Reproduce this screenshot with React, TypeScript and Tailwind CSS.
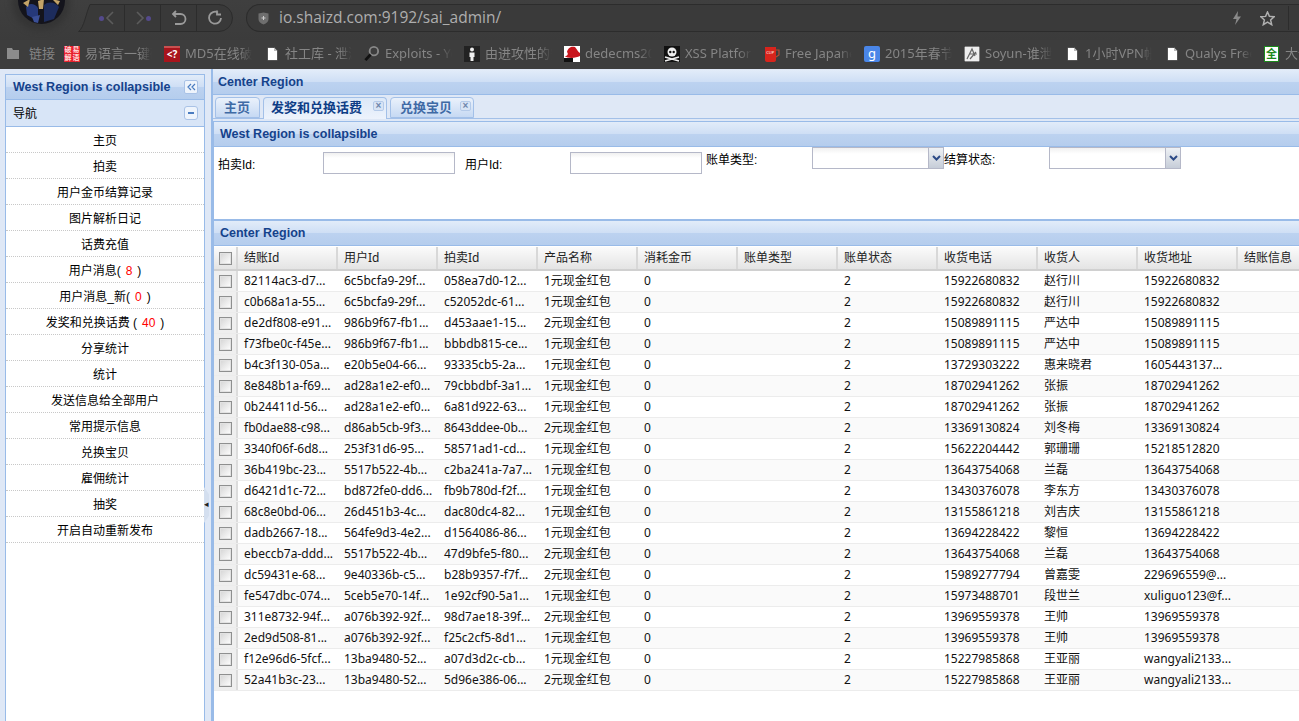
import type { ReactNode } from "react";

const HEAD = ["结账Id", "用户Id", "拍卖Id", "产品名称", "消耗金币", "账单类型", "账单状态", "收货电话", "收货人", "收货地址", "结账信息"];

const ROWS = [
  ["82114ac3-d7...", "6c5bcfa9-29f...", "058ea7d0-12...", "1元现金红包", "15922680832", "赵行川", "15922680832"],
  ["c0b68a1a-55...", "6c5bcfa9-29f...", "c52052dc-61...", "1元现金红包", "15922680832", "赵行川", "15922680832"],
  ["de2df808-e91...", "986b9f67-fb1...", "d453aae1-15...", "2元现金红包", "15089891115", "严达中", "15089891115"],
  ["f73fbe0c-f45e...", "986b9f67-fb1...", "bbbdb815-ce...", "1元现金红包", "15089891115", "严达中", "15089891115"],
  ["b4c3f130-05a...", "e20b5e04-66...", "93335cb5-2a...", "1元现金红包", "13729303222", "惠来晓君", "1605443137..."],
  ["8e848b1a-f69...", "ad28a1e2-ef0...", "79cbbdbf-3a1...", "1元现金红包", "18702941262", "张振", "18702941262"],
  ["0b24411d-56...", "ad28a1e2-ef0...", "6a81d922-63...", "1元现金红包", "18702941262", "张振", "18702941262"],
  ["fb0dae88-c98...", "d86ab5cb-9f3...", "8643ddee-0b...", "2元现金红包", "13369130824", "刘冬梅", "13369130824"],
  ["3340f06f-6d8...", "253f31d6-95...", "58571ad1-cd...", "1元现金红包", "15622204442", "郭珊珊", "15218512820"],
  ["36b419bc-23...", "5517b522-4b...", "c2ba241a-7a7...", "1元现金红包", "13643754068", "兰磊", "13643754068"],
  ["d6421d1c-72...", "bd872fe0-dd6...", "fb9b780d-f2f...", "1元现金红包", "13430376078", "李东方", "13430376078"],
  ["68c8e0bd-06...", "26d451b3-4c...", "dac80dc4-82...", "1元现金红包", "13155861218", "刘吉庆", "13155861218"],
  ["dadb2667-18...", "564fe9d3-4e2...", "d1564086-86...", "1元现金红包", "13694228422", "黎恒", "13694228422"],
  ["ebeccb7a-ddd...", "5517b522-4b...", "47d9bfe5-f80...", "2元现金红包", "13643754068", "兰磊", "13643754068"],
  ["dc59431e-68...", "9e40336b-c5...", "b28b9357-f7f...", "2元现金红包", "15989277794", "曾嘉雯", "229696559@..."],
  ["fe547dbc-074...", "5ceb5e70-14f...", "1e92cf90-5a1...", "1元现金红包", "15973488701", "段世兰", "xuliguo123@f..."],
  ["311e8732-94f...", "a076b392-92f...", "98d7ae18-39f...", "2元现金红包", "13969559378", "王帅", "13969559378"],
  ["2ed9d508-81...", "a076b392-92f...", "f25c2cf5-8d1...", "1元现金红包", "13969559378", "王帅", "13969559378"],
  ["f12e96d6-5fcf...", "13ba9480-52...", "a07d3d2c-cb...", "1元现金红包", "15227985868", "王亚丽", "wangyali2133..."],
  ["52a41b3c-23...", "13ba9480-52...", "5d96e386-06...", "2元现金红包", "15227985868", "王亚丽", "wangyali2133..."],
];

const MENU: [string, string?, string?][] = [
  ["主页"],
  ["拍卖"],
  ["用户金币结算记录"],
  ["图片解析日记"],
  ["话费充值"],
  ["用户消息(", "8", ")"],
  ["用户消息_新(", "0", ")"],
  ["发奖和兑换话费 (", "40", ")"],
  ["分享统计"],
  ["统计"],
  ["发送信息给全部用户"],
  ["常用提示信息"],
  ["兑换宝贝"],
  ["雇佣统计"],
  ["抽奖"],
  ["开启自动重新发布"],
];

const FILE = (
  <svg width="11" height="14" viewBox="0 0 11 14">
    <path d="M0.5 0.5H7L10.5 4V13.5H0.5Z" fill="#fff" stroke="#222" strokeWidth="0.6" />
    <path d="M7 0.5V4H10.5" fill="#bbb" />
  </svg>
);

const BOOKMARKS: [string, ReactNode][] = [
  [
    "易语言一键破",
    <div className="w-[16px] h-[16px] bg-[#e8202c] grid grid-cols-2 grid-rows-2 text-[#ffd8d8] text-[7px] leading-[8px] text-center font-bold whitespace-normal">
      <span>破</span>
      <span>易</span>
      <span>解</span>
      <span>语</span>
    </div>,
  ],
  ["MD5在线破解", <div className="w-[16px] h-[16px] bg-[#a8141c] border-t-2 border-[#c85050] text-white text-[10px] leading-[13px] text-center font-bold">&lt;?</div>],
  ["社工库 - 泄漏", <span className="ml-[3px]">{FILE}</span>],
  [
    "Exploits - Yo",
    <svg width="17" height="17" viewBox="0 0 17 17">
      <circle cx="10.5" cy="6" r="4.5" fill="none" stroke="#888" strokeWidth="2" />
      <path d="M7 9.5L1.5 15.5" stroke="#111" strokeWidth="3" />
    </svg>,
  ],
  [
    "由进攻性的安",
    <svg width="16" height="16" viewBox="0 0 16 16">
      <rect width="16" height="16" fill="#222" />
      <circle cx="8" cy="3.5" r="2" fill="#eee" />
      <path d="M5.5 6.5H10.5V11H9.5V15H6.5V11H5.5Z" fill="#eee" />
    </svg>,
  ],
  [
    "dedecms20",
    <svg width="16" height="16" viewBox="0 0 16 16">
      <rect width="16" height="16" fill="#fff" />
      <path d="M0 10C3 11 5 8 3 6C4 1 8 0 11 1C13 3 14 6 16 7V10C12 12 5 13 0 10Z" fill="#c8141c" />
      <rect y="12" width="9" height="4" fill="#111" />
    </svg>,
  ],
  [
    "XSS Platform",
    <svg width="16" height="16" viewBox="0 0 16 16">
      <rect width="16" height="16" fill="#111" />
      <circle cx="8" cy="6" r="4.5" fill="#eee" />
      <circle cx="6.3" cy="6" r="1.2" fill="#111" />
      <circle cx="9.7" cy="6" r="1.2" fill="#111" />
      <path d="M1 11L15 15M15 11L1 15" stroke="#eee" strokeWidth="1.6" />
    </svg>,
  ],
  [
    "Free Japanese",
    <svg width="16" height="16" viewBox="0 0 16 16">
      <path d="M1 1H12V14C12 15 11 16 10 16H3C2 16 1 15 1 14Z" fill="#d8241c" />
      <path d="M12 4H15V9L12 11" fill="none" stroke="#b84a30" strokeWidth="1.2" />
      <text x="2.2" y="8" fontSize="4" fill="#fff">CUP</text>
    </svg>,
  ],
  ["2015年春节", <div className="w-[16px] h-[16px] rounded-[2px] bg-[#4a86e8] text-white text-[13px] leading-[14px] text-center">g</div>],
  [
    "Soyun-谁泄露",
    <svg width="16" height="16" viewBox="0 0 16 16">
      <rect width="16" height="16" fill="#eee" stroke="#111" />
      <path d="M3 13L8 3L11 10M5 8H13M6 13L12 6" stroke="#666" strokeWidth="1.2" fill="none" />
    </svg>,
  ],
  ["1小时VPN帐号", <span className="ml-[3px]">{FILE}</span>],
  ["Qualys Free", <span className="ml-[3px]">{FILE}</span>],
  ["大全", <div className="w-[15px] h-[16px] bg-white border border-[#1c8a1c] text-[#1c8a1c] text-[11px] leading-[14px] text-center font-bold">全</div>],
];

function PanelHead({ title, pad, children }: { title: string; pad: string; children?: ReactNode }) {
  return (
    <div className={`h-[25px] flex items-center justify-between border-b border-[#99bbe8] bg-[linear-gradient(#e2ecf9_0%,#cfdff5_48%,#bcd2f0_52%,#b5cded_100%)] text-[12.5px] font-bold text-[#15428b] font-['Liberation_Sans',sans-serif] ${pad}`}>
      <span className="whitespace-nowrap">{title}</span>
      {children}
    </div>
  );
}

function Tab({ label, active, close, width }: { label: string; active?: boolean; close?: boolean; width: string }) {
  return (
    <div
      className={`relative rounded-t-[4px] border border-[#a3c0e8] text-[13px] font-bold leading-[20px] ${width} ${
        active ? "h-[22px] -mb-px border-b-0 text-[#0e3d86] bg-[linear-gradient(#dce8f8,#edf3fc)]" : "h-[21px] text-[#3f6aa5] bg-[linear-gradient(#eaf1fb,#c6d9f3)]"
      }`}
    >
      {label}
      {close && (
        <span className="absolute right-[2px] top-[3px] w-[11px] h-[10px] rounded-[2px] border border-[#b4cae9] bg-[#d8e4f5] text-[10px] leading-[8px] text-center text-[#6f86ad]">×</span>
      )}
    </div>
  );
}

function Checkbox() {
  return <div className="w-[13px] h-[13px] border border-[#8e8f8f] shadow-[inset_0_0_0_1px_#e2e2e2] bg-[linear-gradient(135deg,#d4d4d4,#ffffff)]" />;
}

function Select({ width }: { width: string }) {
  return (
    <div className={`flex h-[22px] shrink-0 border border-[#b5b8c8] bg-[linear-gradient(#f0f0f0,#ffffff_30%)] ${width}`}>
      <div className="flex-1" />
      <div className="w-[15px] flex items-center justify-center bg-[linear-gradient(#eef1f5,#c6cdd8)] border-l border-[#b5b8c8]">
        <svg width="9" height="6" viewBox="0 0 9 6">
          <path d="M1 1L4.5 4.5L8 1" fill="none" stroke="#2c4a86" strokeWidth="2" />
        </svg>
      </div>
    </div>
  );
}

function Input({ width }: { width: string }) {
  return <div className={`h-[22px] shrink-0 border border-[#b5b8c8] bg-[linear-gradient(#f0f0f0,#ffffff_25%)] ${width}`} />;
}

function Toolbar() {
  return (
    <div className="h-[40px] bg-[linear-gradient(#3f3f3f,#3b3b3b)] flex items-start pt-[4px] relative">
      <div className="absolute left-[12px] top-[-24px] w-[58px] h-[54px] rounded-full bg-[#343434] blur-[3px]" />
      <svg className="absolute left-[18px] top-[-23px]" width="47" height="47" viewBox="0 0 47 47">
        <circle cx="23.5" cy="23.5" r="23.5" fill="#14141c" />
        <path d="M8 30C10 26 17 26 20 31L20 44L9 38Z" fill="#26397a" />
        <path d="M26 28C30 24 38 25 41 30L36 42L26 45Z" fill="#1d2c5c" />
        <path d="M5 26L12 22L10 30ZM20 24L26 22L25 32L21 32ZM34 22L42 24L40 28Z" fill="#c4a468" />
        <path d="M14 40L22 38L20 46L16 45Z" fill="#3a4f96" />
      </svg>
      <div className="ml-[78px] w-[155px] h-[28px] relative flex">
        <svg className="absolute inset-0" width="155" height="28" viewBox="0 0 155 28">
          <path d="M12 0.5H141A13.5 13.5 0 0 1 141 27.5H0.5C6 24 8 9 12 0.5Z" fill="#393939" stroke="#2c2c2c" />
        </svg>
        <div className="relative w-[47px] flex items-center justify-end gap-[1px] pr-[9px] border-r border-[#2c2c2c]">
          <span className="w-[5px] h-[5px] rounded-full bg-[#544a8c]" />
          <svg width="10" height="14" viewBox="0 0 10 14"><path d="M8 1L2 7L8 13" fill="none" stroke="#5c5c5c" strokeWidth="1.6" /></svg>
        </div>
        <div className="relative w-[36px] flex items-center justify-center gap-[1px] border-r border-[#2c2c2c]">
          <svg width="10" height="14" viewBox="0 0 10 14"><path d="M2 1L8 7L2 13" fill="none" stroke="#5c5c5c" strokeWidth="1.6" /></svg>
          <span className="w-[5px] h-[5px] rounded-full bg-[#544a8c]" />
        </div>
        <div className="relative w-[36px] flex items-center justify-center border-r border-[#2c2c2c]">
          <svg width="16" height="16" viewBox="0 0 16 16"><path d="M5 1L2 4L5 7M2 4H9.5A4.5 4.5 0 0 1 9.5 14H4" fill="none" stroke="#9a9a9a" strokeWidth="1.8" /></svg>
        </div>
        <div className="relative flex-1 flex items-center justify-center">
          <svg width="16" height="16" viewBox="0 0 16 16"><path d="M11 2.5A6 6 0 1 0 14 8M10 0.5V4.5H14" fill="none" stroke="#9a9a9a" strokeWidth="1.8" /></svg>
        </div>
      </div>
      <div className="ml-[13px] flex-1 h-[28px] rounded-l-[14px] border border-r-0 border-[#2c2c2c] bg-[#3a3a3a] flex items-center pl-[11px] pr-[10px]">
        <svg width="11" height="13" viewBox="0 0 11 13">
          <path d="M0.5 1.5L5.5 0.5L10.5 1.5V7C10.5 10 8 11.5 5.5 12.5C3 11.5 0.5 10 0.5 7Z" fill="#6e6e6e" />
          <path d="M5.5 4V8M3.5 6H7.5" stroke="#ccc" strokeWidth="1" />
        </svg>
        <span className="ml-[10px] text-[15.5px] text-[#aeaeae] font-['Open_Sans',sans-serif]">io.shaizd.com:9192/sai_admin/</span>
        <div className="ml-auto flex items-center">
          <svg width="10" height="14" viewBox="0 0 10 14"><path d="M6 0L1 8H4.5L3 14L9 5.5H5.5Z" fill="#8a8a8a" /></svg>
          <svg className="ml-[18px]" width="15" height="15" viewBox="0 0 15 15"><path d="M7.5 1L9.4 5.4L14.2 5.8L10.6 9L11.7 13.7L7.5 11.2L3.3 13.7L4.4 9L0.8 5.8L5.6 5.4Z" fill="none" stroke="#b0b0b0" strokeWidth="1.5" /></svg>
          <div className="ml-[13px] w-px h-[24px] bg-[#2c2c2c]" />
        </div>
      </div>
    </div>
  );
}

function Bookmarks() {
  return (
    <div className="h-[29px] pb-[2px] bg-[#3d3d3d] flex items-center text-[13px] text-[#858585] whitespace-nowrap font-['Noto_Sans','Noto_Sans_CJK_SC',sans-serif]">
      <div className="w-[64px] flex items-center pl-[7px] gap-[10px] shrink-0">
        <svg width="12" height="11" viewBox="0 0 12 11"><path d="M0 0H5L6 2H12V11H0Z" fill="#8c8c8c" /></svg>
        <span>链接</span>
      </div>
      {BOOKMARKS.map(([label, icon]) => (
        <div key={label} className="w-[100px] shrink-0 flex items-center">
          <div className="w-[16px] h-[16px] shrink-0 flex items-center">{icon}</div>
          <span className="ml-[5px] w-[67px] overflow-hidden [mask-image:linear-gradient(90deg,#000_80%,transparent)]">{label}</span>
        </div>
      ))}
    </div>
  );
}

function Sidebar() {
  return (
    <div className="w-[200px] shrink-0 mt-[5px] ml-[5px] border-x border-t border-[#99bbe8] bg-white flex flex-col">
      <PanelHead title="West Region is collapsible" pad="pl-[7px] pr-[6px]">
        <div className="w-[14px] h-[14px] rounded-[2px] border border-[#a9c2e6] bg-[#eef4fc] flex items-center justify-center">
          <svg width="9" height="8" viewBox="0 0 9 8"><path d="M4 1L1 4L4 7M8 1L5 4L8 7" fill="none" stroke="#4a7cc0" strokeWidth="1.2" /></svg>
        </div>
      </PanelHead>
      <div className="h-[27px] flex items-center justify-between pl-[7px] pr-[6px] bg-[#d8e5f7] border-b border-[#99bbe8] text-[12px] text-black">
        <span className="pt-px">导航</span>
        <div className="w-[14px] h-[14px] rounded-[3px] border border-[#a9c2e6] bg-[#eef4fc] flex items-center justify-center">
          <div className="w-[6px] h-[1.5px] bg-[#4a7cc0]" />
        </div>
      </div>
      {MENU.map(([text, count, tail]) => (
        <div key={text} className="h-[26px] pt-[2px] flex items-center justify-center border-b border-dotted border-[#c8c8c8] text-[12px] text-black whitespace-pre">
          {text}
          {count && <span className="text-[#f00] px-[5px]">{count}</span>}
          {tail}
        </div>
      ))}
    </div>
  );
}

function Grid() {
  return (
    <div className="text-[12px] text-[#111] font-['Noto_Sans','Noto_Sans_CJK_SC',sans-serif]">
      <div className="flex h-[24px] border-b-2 border-[#d0d0d0] bg-[linear-gradient(#fbfbfb,#e4e4e4)]">
        <div className="w-[24px] shrink-0 flex items-center justify-center border-r-2 border-[#d8d8d8]">
          <Checkbox />
        </div>
        {HEAD.map((h) => (
          <div key={h} className="w-[100px] shrink-0 flex items-center pl-[6px] border-r-2 border-[#d8d8d8] text-[#222]">
            {h}
          </div>
        ))}
      </div>
      {ROWS.map((r, i) => (
        <div key={r[0]} className={`flex h-[21px] border-b border-[#ececec] ${i % 2 ? "bg-[#fafafa]" : "bg-white"}`}>
          <div className="w-[24px] shrink-0 flex items-center justify-center bg-[#efefef] border-r-2 border-[#dcdcdc]">
            <Checkbox />
          </div>
          {[r[0], r[1], r[2], r[3], "0", "", "2", r[4], r[5], r[6], ""].map((cell, j) => (
            <div key={j} className="w-[100px] shrink-0 flex items-center pl-[6px] whitespace-nowrap overflow-hidden">
              {cell}
            </div>
          ))}
        </div>
      ))}
    </div>
  );
}

export default function App() {
  return (
    <div className="w-[1299px] h-[721px] overflow-hidden flex flex-col font-['Liberation_Sans','Noto_Sans_CJK_SC',sans-serif]">
      <Toolbar />
      <Bookmarks />
      <div className="flex-1 min-h-0 flex bg-[#dfe8f6] relative">
        <Sidebar />
        <div className="absolute left-[204px] top-[418px] w-[5px] h-[36px] bg-[#d4dfef] [clip-path:polygon(0_0,100%_20%,100%_80%,0_100%)] flex items-center justify-end text-[9px] text-[#222]">◂</div>
        <div className="ml-[6px] flex-1 min-w-0 border-l-2 border-[#99bbe8] flex flex-col overflow-hidden">
          <div className="mt-px">
            <PanelHead title="Center Region" pad="px-[5px]" />
          </div>
          <div className="h-[24px] flex items-end gap-[3px] pl-[2px] bg-[#dfe8f6] border-b border-[#a3c0e8]">
            <Tab label="主页" width="w-[45px] pl-[8px]" />
            <Tab label="发奖和兑换话费" active close width="w-[124px] pl-[7px]" />
            <Tab label="兑换宝贝" close width="w-[84px] pl-[9px]" />
          </div>
          <div className="flex-1 min-h-0 border-l border-[#99bbe8] mt-[2px] bg-white border-t border-t-[#99bbe8]">
            <PanelHead title="West Region is collapsible" pad="px-[6px]" />
            <div className="h-[73px] text-[12px] text-black flex items-start">
              <span className="ml-[4px] mt-[9px] w-[105px]">拍卖Id:</span>
              <div className="mt-[5px]"><Input width="w-[132px]" /></div>
              <span className="ml-[10px] mt-[9px] w-[105px]">用户Id:</span>
              <div className="mt-[5px]"><Input width="w-[132px]" /></div>
              <span className="ml-[4px] mt-[4px] w-[106px]">账单类型:</span>
              <Select width="w-[132px]" />
              <span className="mt-[4px] w-[105px]">结算状态:</span>
              <Select width="w-[132px]" />
            </div>
            <div className="border-t-2 border-[#99bbe8] mb-px -mt-px">
              <PanelHead title="Center Region" pad="px-[6px]" />
            </div>
            <Grid />
          </div>
        </div>
      </div>
    </div>
  );
}
